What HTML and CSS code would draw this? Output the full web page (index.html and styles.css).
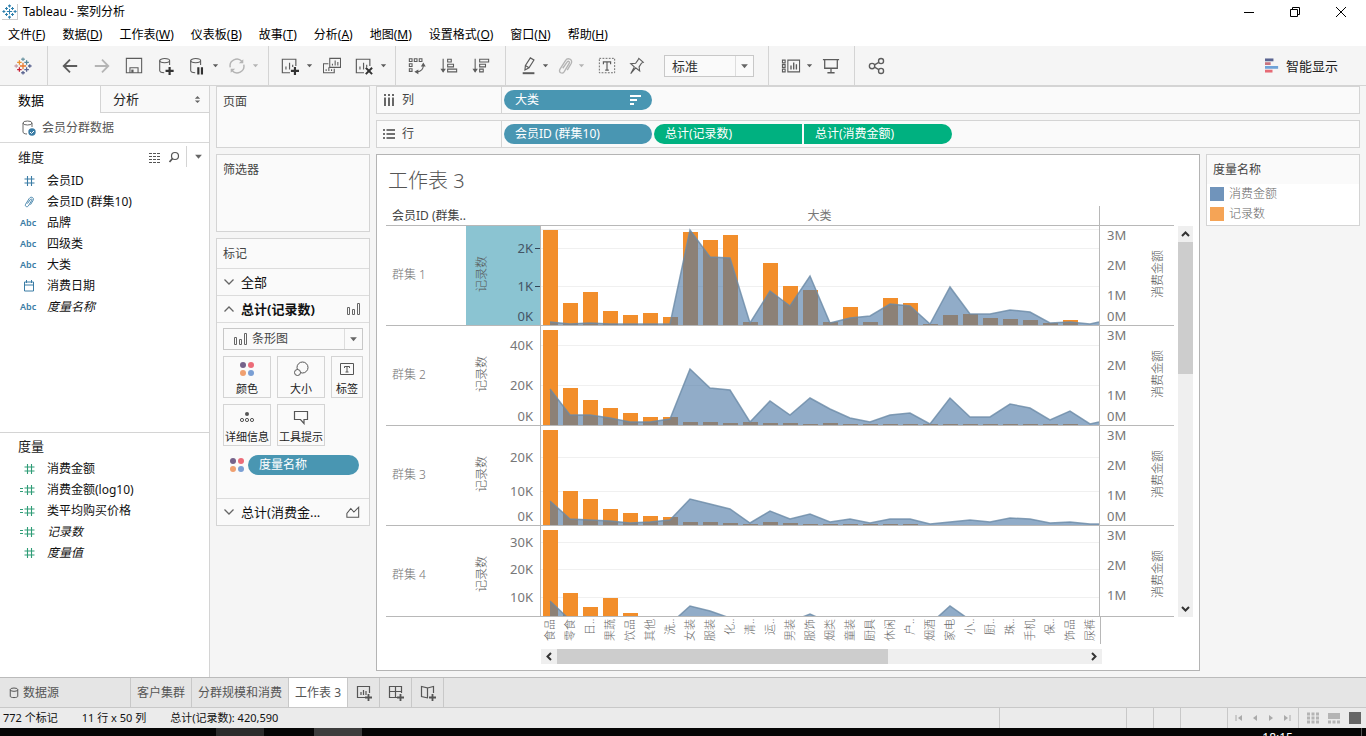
FILE: index.html
```html
<!DOCTYPE html>
<html lang="zh-CN">
<head>
<meta charset="utf-8">
<title>Tableau - 案列分析</title>
<link rel="stylesheet" href="styles.css">
</head>
<body>
<svg class="defs" aria-hidden="true">
  <symbol id="i-logo" viewBox="0 0 20 20"><g fill="none" stroke-width="1.4"><path stroke="#e8762d" d="M10 6.5v7M6.5 10h7"/><path stroke="#c72035" d="M6 11.5v5M3.500 14h5"/><path stroke="#eb912c" d="M6 3.500v5M3.500 6h5"/><path stroke="#5c6692" d="M14 11.500v5M11.500 14h5"/><path stroke="#59879b" d="M14 3.500v5M11.500 6h5"/><path stroke="#7199a6" d="M10 .5v4M8 2.500h4"/><path stroke="#5b6591" d="M10 15.500v4M8 17.500h4M17.500 8v4M15.500 10h4"/><path stroke="#c9a0a8" d="M2.500 8v4M.5 10h4"/></g></symbol>
  <symbol id="i-logo-blue" viewBox="0 0 20 20"><g fill="none" stroke="#2f80ad" stroke-width="1.400"><path d="M10 6.500v7M6.500 10h7M6 12v4M4 14h4M6 4v4M4 6h4M14 12v4M12 14h4M14 4v4M12 6h4M10 .5v4M8 2.500h4M10 15.500v4M8 17.500h4M17.500 8v4M15.500 10h4M2.500 8v4M.5 10h4"/></g></symbol>
  <symbol id="i-back" viewBox="0 0 20 20"><path d="M18 10H3M10 3l-7 7 7 7" fill="none" stroke="currentColor" stroke-width="2"/></symbol>
  <symbol id="i-fwd" viewBox="0 0 20 20"><path d="M2 10h15M10 3l7 7-7 7" fill="none" stroke="currentColor" stroke-width="2"/></symbol>
  <symbol id="i-save" viewBox="0 0 20 20"><path d="M1.500 1.500h17v16h-17zM5.500 17v-5h9v5" fill="none" stroke="currentColor" stroke-width="1.200"/><path d="M7 14h2.500v3.500H7z" fill="currentColor"/></symbol>
  <symbol id="i-dsadd" viewBox="0 0 20 20"><path d="M14 9V4M3 4v11c0 1.300 2 2.300 5 2.500" fill="none" stroke="currentColor" stroke-width="1.200"/><ellipse cx="8.500" cy="4" rx="5.500" ry="2.300" fill="none" stroke="currentColor" stroke-width="1.200"/><path d="M14 11v9M9.500 15.500h9" stroke="#333" stroke-width="2.400"/></symbol>
  <symbol id="i-dspause" viewBox="0 0 20 20"><path d="M14 9V4M3 4v11c0 1.300 2 2.300 5 2.500" fill="none" stroke="currentColor" stroke-width="1.200"/><ellipse cx="8.500" cy="4" rx="5.500" ry="2.300" fill="none" stroke="currentColor" stroke-width="1.200"/><path d="M11.500 11.500v8M15.500 11.500v8" stroke="#333" stroke-width="2.400"/></symbol>
  <symbol id="i-refresh" viewBox="0 0 20 20"><path d="M2.500 11.500a7.500 7.500 0 0 1 13-6.500M17.500 8.500a7.500 7.500 0 0 1-13 6.500" fill="none" stroke="currentColor" stroke-width="1.600"/><path d="M17 2.500V7h-5zM3 17.500V13h5z" fill="currentColor"/></symbol>
  <symbol id="i-sheetadd" viewBox="0 0 20 20"><path d="M10 17.500H1.500v-15h15V10M5.500 14v-3.500M9.500 14V6.500M13 11V8.500" fill="none" stroke="currentColor" stroke-width="1.300"/><path d="M15.500 11v9M11 15.500h9" stroke="#333" stroke-width="2.400"/></symbol>
  <symbol id="i-dup" viewBox="0 0 20 20"><path d="M7.500 1.500h12v10h-12zM6 7.500H.5v10h12V13M10.500 9.500v-2M13.500 9.500V4M16.500 9.500v-4M3.500 15.500v-2M6.500 15.500v-4M9.500 15.500v-2" fill="none" stroke="currentColor" stroke-width="1.200"/></symbol>
  <symbol id="i-clear" viewBox="0 0 20 20"><path d="M10 17.500H1.500v-15h15V10M5.500 14v-3.500M9.500 14V6.500M13 11V8.500" fill="none" stroke="currentColor" stroke-width="1.300"/><path d="M12 12l7 7M19 12l-7 7" stroke="#333" stroke-width="2.200"/></symbol>
  <symbol id="i-swap" viewBox="0 0 20 20"><path d="M1.500 2h3v3h-3zM7 2h3v3H7zM12.500 2h3v3h-3zM1.500 7.500h3v3h-3zM1.500 13h3v3h-3zM17 9.500c0 4-2.500 6.500-7 7" fill="none" stroke="currentColor" stroke-width="1.200"/><path d="M17 6l2.700 4.500h-5.400zM7 16.500l4.500-2.700v5.400z" fill="currentColor"/></symbol>
  <symbol id="i-sortasc" viewBox="0 0 20 20"><path d="M3.500 2v14M8.500 2.500h4v3h-4zM8.500 8h6.500v3H8.500zM8.500 13.500h10v3h-10z" fill="none" stroke="currentColor" stroke-width="1.200"/><path d="M.5 13h6l-3 4.500z" fill="currentColor"/></symbol>
  <symbol id="i-sortdesc" viewBox="0 0 20 20"><path d="M3.500 2v14M8.500 2.500h10v3h-10zM8.500 8h6.500v3H8.500zM8.500 13.500h4v3h-4z" fill="none" stroke="currentColor" stroke-width="1.200"/><path d="M.5 13h6l-3 4.500z" fill="currentColor"/></symbol>
  <symbol id="i-pen" viewBox="0 0 20 20"><path d="M6 9.500L11.500 1l4 2.300L10 12l-4.500 2.500zM6 9.500l4 2.500" fill="none" stroke="currentColor" stroke-width="1.300"/><path d="M3 18h13" stroke="currentColor" stroke-width="2.200"/></symbol>
  <symbol id="i-clip" viewBox="0 0 20 20"><path d="M7.500 12.500l5-7c1.200-1.500 3.200-.3 2.300 1.400L9 16.500c-2 2.800-6.500.8-4.700-2.700L10.500 4c2.500-3.800 8.500-1.500 6.500 3l-4.500 7.500" fill="none" stroke="currentColor" stroke-width="1.500"/></symbol>
  <symbol id="i-tbox" viewBox="0 0 20 20"><path d="M1.500 1.500h17v16h-17z" fill="none" stroke="currentColor" stroke-dasharray="2 1.500"/><path d="M6 8V5.500h8V8M10 5.500v9M8 14.500h4" fill="none" stroke="currentColor" stroke-width="1.300"/></symbol>
  <symbol id="i-pin" viewBox="0 0 20 20"><path d="M12 1.500l5 4.500-2 .8-2.700 4.200.7 4.500-4.500-3.500L3 18.500l4-7.500-4-3.500 5.500-.5 2.500-3.500z" fill="none" stroke="currentColor" stroke-width="1.200"/></symbol>
  <symbol id="i-showme" viewBox="0 0 22 20"><path d="M1.500 3.500h3v3h-3zM1.500 8.500h3v3h-3zM1.500 13.500h3v3h-3zM7.500 3.500h13v13h-13z" fill="none" stroke="currentColor" stroke-width="1.200"/><path d="M11 14V9.500M14 14V6M17 14V8" stroke="currentColor" stroke-width="1.500"/></symbol>
  <symbol id="i-present" viewBox="0 0 20 20"><path d="M1 3h18M3 3v9.500h14V3M10 12.500v5M6 17.500h8" fill="none" stroke="currentColor" stroke-width="1.400"/></symbol>
  <symbol id="i-share" viewBox="0 0 20 20"><g fill="none" stroke="currentColor" stroke-width="1.500"><circle cx="4.500" cy="10" r="3"/><circle cx="14.500" cy="4.500" r="2.800"/><circle cx="14.500" cy="15.500" r="2.800"/><path d="M7.200 8.700l4.800-2.700M7.200 11.300l4.800 2.700"/></g></symbol>
  <symbol id="i-smart" viewBox="0 0 16 16"><path d="M0 2h9" stroke="#5b6591" stroke-width="3"/><path d="M0 6h6" stroke="#c8737f" stroke-width="3"/><path d="M0 10h14" stroke="#6fa3d8" stroke-width="3"/><path d="M0 14h8" stroke="#e66a75" stroke-width="3"/></symbol>
  <symbol id="i-caret" viewBox="0 0 8 8"><path d="M1 2.500h6l-3 3.500z" fill="currentColor"/></symbol>
  <symbol id="i-ds" viewBox="0 0 16 16"><path d="M2 3v9c0 1 1.500 2 4 2M11 3v4" fill="none" stroke="#666"/><ellipse cx="6.500" cy="3" rx="4.500" ry="2" fill="none" stroke="#666"/><circle cx="11" cy="12" r="3.700" fill="#3a7ca5"/><path d="M9 12l1.500 1.500L13 11" fill="none" stroke="#fff"/></symbol>
  <symbol id="i-cyl" viewBox="0 0 12 14"><path d="M1.500 3v8c0 2 9 2 9 0V3" fill="none" stroke="currentColor" stroke-width="1.200"/><ellipse cx="6" cy="3" rx="4.500" ry="2" fill="none" stroke="currentColor" stroke-width="1.200"/></symbol>
  <symbol id="i-list" viewBox="0 0 12 12"><path d="M0 2.500h12M0 5.500h12M0 8.500h12M0 11.500h12" stroke="#555" stroke-dasharray="3 1"/></symbol>
  <symbol id="i-find" viewBox="0 0 12 12"><circle cx="7" cy="5" r="3.500" fill="none" stroke="#555" stroke-width="1.200"/><path d="M4.500 7.500L1.500 11" stroke="#555" stroke-width="1.700"/></symbol>
  <symbol id="i-hash" viewBox="0 0 18 12"><path d="M7.500 1v10M11.500 1v10M4.500 4h10M4.500 8h10" stroke="currentColor" stroke-width="1.100"/></symbol>
  <symbol id="i-eqhash" viewBox="0 0 18 12"><path d="M7.500 1v10M11.500 1v10M4.500 4h10M4.500 8h10M0 4.500h3M0 7.500h3" stroke="currentColor" stroke-width="1.100"/></symbol>
  <symbol id="i-date" viewBox="0 0 18 12"><path d="M4.500 2h9v9h-9zM4.500 5h9M6.500 0v3M11.500 0v3" fill="none" stroke="currentColor"/></symbol>
  <symbol id="i-bars" viewBox="0 0 14 14"><path d="M1.500 5.500h2v7h-2zM6.500 7.500h2v5h-2zM11.500 1.500h2v11h-2z" fill="none" stroke="#666"/></symbol>
  <symbol id="i-area" viewBox="0 0 16 14"><path d="M1 13V8.500L5.500 3 9 7l5.500-5.500V13z" fill="none" stroke="#555" stroke-width="1.200"/></symbol>
  <symbol id="i-down" viewBox="0 0 12 8"><path d="M1.500 1.500L6 6l4.500-4.500" fill="none" stroke="#666" stroke-width="1.300"/></symbol>
  <symbol id="i-up" viewBox="0 0 12 8"><path d="M1.500 6.500L6 2l4.500 4.500" fill="none" stroke="#666" stroke-width="1.300"/></symbol>
  <symbol id="i-color" viewBox="0 0 16 16"><circle cx="4" cy="4" r="3" fill="#75628a"/><circle cx="12" cy="4" r="3" fill="#ec6b78"/><circle cx="4" cy="12" r="3" fill="#f0a070"/><circle cx="12" cy="12" r="3" fill="#7a9fd4"/></symbol>
  <symbol id="i-size" viewBox="0 0 16 16"><circle cx="9.500" cy="6.500" r="5.500" fill="none" stroke="#555"/><circle cx="4.500" cy="11.500" r="3" fill="#fafafa" stroke="#555"/></symbol>
  <symbol id="i-label" viewBox="0 0 16 16"><path d="M1.500 2.500h13v11h-13zM5.500 7V5.500h5V7M8 5.500V11M6.500 11h3" fill="none" stroke="#555"/></symbol>
  <symbol id="i-detail" viewBox="0 0 16 16"><circle cx="8" cy="5" r="2" fill="#555"/><g fill="none" stroke="#555"><circle cx="3" cy="11" r="1.600"/><circle cx="8" cy="11" r="1.600"/><circle cx="13" cy="11" r="1.600"/></g></symbol>
  <symbol id="i-tip" viewBox="0 0 16 16"><path d="M1.500 2.500h13v8H11v4L7.500 10.500h-6z" fill="none" stroke="#555" stroke-width="1.200"/></symbol>
  <symbol id="i-cols" viewBox="0 0 12 12"><path d="M2 0v2M6 0v2M10 0v2M2 3.500V12M6 3.500V12M10 3.500V12" stroke="#444" stroke-width="1.600"/></symbol>
  <symbol id="i-rows" viewBox="0 0 12 12"><path d="M0 2h2M0 6h2M0 10h2M3.500 2H12M3.500 6H12M3.500 10H12" stroke="#444" stroke-width="1.600"/></symbol>
  <symbol id="i-sort" viewBox="0 0 12 12"><path d="M1 2h11M1 6h7M1 10h4" stroke="#fff" stroke-width="2"/></symbol>
  <symbol id="i-tabsheet" viewBox="0 0 16 16"><path d="M9 12.500H1.500v-11h12V8M5 10V7M7.500 10V5M10 10V6" fill="none" stroke="currentColor" stroke-width="1.200"/><path d="M12.500 9v7M9 12.500h7" stroke="currentColor" stroke-width="1.800"/></symbol>
  <symbol id="i-tabdash" viewBox="0 0 16 16"><path d="M9 12.500H1.500v-11h12V8M1.500 6.500h12M7.500 1.500v11" fill="none" stroke="currentColor" stroke-width="1.200"/><path d="M12.500 9v7M9 12.500h7" stroke="currentColor" stroke-width="1.800"/></symbol>
  <symbol id="i-tabstory" viewBox="0 0 16 16"><path d="M8 13L1.500 11.500v-10L7.500 3v10M7.500 3l6-1.500V8" fill="none" stroke="currentColor" stroke-width="1.200"/><path d="M12.500 9v7M9 12.500h7" stroke="currentColor" stroke-width="1.800"/></symbol>
</svg>

<header>
  <div class="titlebar">
    <svg class="app-icon"><use href="#i-logo-blue"/></svg>
    <span class="app-title">Tableau - 案列分析</span>
    <div class="window-buttons">
      <button aria-label="最小化"><svg viewBox="0 0 12 12"><path d="M1 6.500h10" stroke="#000"/></svg></button>
      <button aria-label="还原"><svg viewBox="0 0 12 12"><path d="M1.500 3.500h7v7h-7zM3.500 3.500v-2h7v7h-2" fill="none" stroke="#000"/></svg></button>
      <button aria-label="关闭"><svg viewBox="0 0 12 12"><path d="M1 1l10 10M11 1L1 11" stroke="#000"/></svg></button>
    </div>
  </div>
  <nav class="menubar">
    <button>文件(<u>F</u>)</button><button>数据(<u>D</u>)</button><button>工作表(<u>W</u>)</button><button>仪表板(<u>B</u>)</button><button>故事(<u>T</u>)</button><button>分析(<u>A</u>)</button><button>地图(<u>M</u>)</button><button>设置格式(<u>O</u>)</button><button>窗口(<u>N</u>)</button><button>帮助(<u>H</u>)</button>
  </nav>
  <div class="toolbar">
    <div class="tools tools-home"><button class="tool" aria-label="开始页"><svg><use href="#i-logo"/></svg></button></div>
    <div class="tools tools-file">
      <button class="tool" aria-label="撤消"><svg><use href="#i-back"/></svg></button>
      <button class="tool dim" aria-label="重做"><svg><use href="#i-fwd"/></svg></button>
      <button class="tool" aria-label="保存"><svg><use href="#i-save"/></svg></button>
      <button class="tool" aria-label="新建数据源"><svg><use href="#i-dsadd"/></svg></button>
      <button class="tool mid" aria-label="暂停更新"><svg><use href="#i-dspause"/></svg></button>
      <button class="more" aria-label="更多"><svg><use href="#i-caret"/></svg></button>
      <button class="tool mid dim" aria-label="刷新"><svg><use href="#i-refresh"/></svg></button>
      <button class="more dim" aria-label="更多"><svg><use href="#i-caret"/></svg></button>
    </div>
    <div class="tools tools-sheet">
      <button class="tool" aria-label="新建工作表"><svg><use href="#i-sheetadd"/></svg></button>
      <button class="more" aria-label="更多"><svg><use href="#i-caret"/></svg></button>
      <button class="tool" aria-label="复制"><svg><use href="#i-dup"/></svg></button>
      <button class="tool" aria-label="清除"><svg><use href="#i-clear"/></svg></button>
      <button class="more" aria-label="更多"><svg><use href="#i-caret"/></svg></button>
    </div>
    <div class="tools tools-sort">
      <button class="tool" aria-label="交换行和列"><svg><use href="#i-swap"/></svg></button>
      <button class="tool" aria-label="升序"><svg><use href="#i-sortasc"/></svg></button>
      <button class="tool" aria-label="降序"><svg><use href="#i-sortdesc"/></svg></button>
    </div>
    <div class="tools tools-format">
      <button class="tool slim" aria-label="突出显示"><svg><use href="#i-pen"/></svg></button>
      <button class="more" aria-label="更多"><svg><use href="#i-caret"/></svg></button>
      <button class="tool slim dim" aria-label="组"><svg><use href="#i-clip"/></svg></button>
      <button class="more dim" aria-label="更多"><svg><use href="#i-caret"/></svg></button>
      <button class="tool mid text-tool" aria-label="显示标签"><svg><use href="#i-tbox"/></svg></button>
      <button class="tool mid" aria-label="固定轴"><svg><use href="#i-pin"/></svg></button>
      <div class="combo fit"><select aria-label="适合"><option>标准</option></select><svg class="combo-caret"><use href="#i-caret"/></svg></div>
    </div>
    <div class="tools tools-view">
      <button class="tool mid" aria-label="显示卡"><svg class="wide"><use href="#i-showme"/></svg></button>
      <button class="more" aria-label="更多"><svg><use href="#i-caret"/></svg></button>
      <button class="tool mid" aria-label="演示模式"><svg><use href="#i-present"/></svg></button>
    </div>
    <div class="tools tools-share"><button class="tool mid" aria-label="共享"><svg><use href="#i-share"/></svg></button></div>
    <button class="smart"><svg><use href="#i-smart"/></svg>智能显示</button>
  </div>
</header>

<main class="workspace">
  <aside class="data-pane">
    <div class="pane-tabs">
      <button class="pane-tab active">数据</button>
      <button class="pane-tab">分析<svg viewBox="0 0 8 10"><path d="M1 4l3-3 3 3zM1 6l3 3 3-3z" fill="#666"/></svg></button>
    </div>
    <div class="source"><svg><use href="#i-ds"/></svg>会员分群数据</div>
    <section class="fields dims">
      <div class="fields-head"><h2>维度</h2>
        <button aria-label="查看数据"><svg><use href="#i-list"/></svg></button>
        <button aria-label="查找"><svg><use href="#i-find"/></svg></button>
        <button class="fields-menu" aria-label="菜单"><svg><use href="#i-caret"/></svg></button>
      </div>
      <ul>
        <li><svg><use href="#i-hash"/></svg>会员ID</li>
        <li><svg><use href="#i-clip"/></svg>会员ID (群集10)</li>
        <li><span class="abc">Abc</span>品牌</li>
        <li><span class="abc">Abc</span>四级类</li>
        <li><span class="abc">Abc</span>大类</li>
        <li><svg><use href="#i-date"/></svg>消费日期</li>
        <li><span class="abc">Abc</span><i>度量名称</i></li>
      </ul>
    </section>
    <section class="fields measures">
      <div class="fields-head"><h2>度量</h2></div>
      <ul>
        <li><svg><use href="#i-hash"/></svg>消费金额</li>
        <li><svg><use href="#i-eqhash"/></svg>消费金额(log10)</li>
        <li><svg><use href="#i-eqhash"/></svg>类平均购买价格</li>
        <li><svg><use href="#i-eqhash"/></svg><i>记录数</i></li>
        <li><svg><use href="#i-hash"/></svg><i>度量值</i></li>
      </ul>
    </section>
  </aside>

  <div class="cards">
    <section class="card pages"><h3>页面</h3></section>
    <section class="card filters"><h3>筛选器</h3></section>
    <section class="card marks">
      <h3>标记</h3>
      <button class="mark-row"><svg class="chev"><use href="#i-down"/></svg><span>全部</span></button>
      <button class="mark-row open"><svg class="chev"><use href="#i-up"/></svg><span>总计(记录数)</span><svg class="kind"><use href="#i-bars"/></svg></button>
      <div class="mark-body">
        <div class="combo mark-type"><svg class="kind"><use href="#i-bars"/></svg><select aria-label="标记类型"><option>条形图</option></select><svg class="combo-caret"><use href="#i-caret"/></svg></div>
        <div class="mark-buttons">
          <button><svg><use href="#i-color"/></svg>颜色</button>
          <button><svg><use href="#i-size"/></svg>大小</button>
          <button><svg><use href="#i-label"/></svg>标签</button>
          <button><svg><use href="#i-detail"/></svg>详细信息</button>
          <button><svg><use href="#i-tip"/></svg>工具提示</button>
        </div>
        <div class="mark-pill"><svg><use href="#i-color"/></svg><button class="pill blue">度量名称</button></div>
      </div>
      <button class="mark-row"><svg class="chev"><use href="#i-down"/></svg><span>总计(消费金...</span><svg class="kind"><use href="#i-area"/></svg></button>
    </section>
  </div>

  <div class="view">
    <div class="shelf"><div class="shelf-name"><svg><use href="#i-cols"/></svg>列</div>
      <div class="shelf-pills"><button class="pill blue">大类<svg><use href="#i-sort"/></svg></button></div></div>
    <div class="shelf"><div class="shelf-name"><svg><use href="#i-rows"/></svg>行</div>
      <div class="shelf-pills"><button class="pill blue">会员ID (群集10)</button><button class="pill green first">总计(记录数)</button><button class="pill green last">总计(消费金额)</button></div></div>
    <div class="view-body">
      <section class="sheet">
        <h1>工作表 3</h1>
        <div class="sheet-scroll">
          <div class="viz">
            <div class="viz-head"><span class="row-head">会员ID (群集..</span><span class="col-head">大类</span><span></span></div>
            <div id="rows"></div>
            <div class="viz-foot"><div class="categories" id="categories"></div></div>
          </div>
          <div class="vscroll"><svg viewBox="0 0 15 15"><path d="M4 9.500L7.500 6 11 9.500" fill="none" stroke="#333" stroke-width="2"/></svg><div class="vthumb"></div><svg viewBox="0 0 15 15"><path d="M4 5.500L7.500 9 11 5.500" fill="none" stroke="#333" stroke-width="2"/></svg></div>
        </div>
        <div class="hscroll"><svg viewBox="0 0 15 15"><path d="M9.500 4L6 7.500 9.500 11" fill="none" stroke="#333" stroke-width="2"/></svg><div class="hthumb"></div><svg viewBox="0 0 15 15"><path d="M5.500 4L9 7.500 5.500 11" fill="none" stroke="#333" stroke-width="2"/></svg></div>
      </section>
      <aside class="legend">
        <h3>度量名称</h3>
        <ul><li><span class="swatch amount"></span>消费金额</li><li><span class="swatch count"></span>记录数</li></ul>
      </aside>
    </div>
  </div>
</main>

<nav class="sheet-tabs">
  <button class="source-tab"><svg class="cyl"><use href="#i-cyl"/></svg>数据源</button>
  <button>客户集群</button><button>分群规模和消费</button><button class="active">工作表 3</button>
  <button class="new-tab" aria-label="新建工作表"><svg><use href="#i-tabsheet"/></svg></button>
  <button class="new-tab" aria-label="新建仪表板"><svg><use href="#i-tabdash"/></svg></button>
  <button class="new-tab" aria-label="新建故事"><svg><use href="#i-tabstory"/></svg></button>
</nav>
<footer class="status">
  <span>772 个标记</span><span>11 行 x 50 列</span><span>总计(记录数): 420,590</span>
  <div class="status-cells">
    <div class="cell-wide"></div><div class="cell-small"></div><div class="cell-small"></div><div class="cell-mid"></div>
    <div class="nav-cell">
      <button aria-label="第一个"><svg viewBox="0 0 10 8"><path d="M2 1v6" stroke="#aaa"/><path d="M8 1v6L4 4z" fill="#aaa"/></svg></button>
      <button aria-label="上一个"><svg viewBox="0 0 10 8"><path d="M7 1v6L3 4z" fill="#aaa"/></svg></button>
      <button aria-label="下一个"><svg viewBox="0 0 10 8"><path d="M3 1v6l4-3z" fill="#aaa"/></svg></button>
      <button aria-label="最后一个"><svg viewBox="0 0 10 8"><path d="M8 1v6" stroke="#aaa"/><path d="M2 1v6l4-3z" fill="#aaa"/></svg></button>
    </div>
    <div class="mode-cell">
      <button aria-label="工作表排序程序"><svg viewBox="0 0 12 12"><path d="M0 2h12M0 6h12M0 10h12" stroke="#b4b4b4" stroke-width="3" stroke-dasharray="3 1.500"/></svg></button>
      <button aria-label="胶片"><svg viewBox="0 0 12 12"><path d="M0 4h12" stroke="#b4b4b4" stroke-width="6"/><path d="M0 10h12" stroke="#b4b4b4" stroke-width="3" stroke-dasharray="3 1.500"/></svg></button>
      <button aria-label="标签"><svg viewBox="0 0 12 12"><path d="M0 0h12v12H0z" fill="#666"/></svg></button>
    </div>
  </div>
</footer>
<div class="taskbar"><span class="task"></span><span class="task lit"></span><span class="clock">18:15</span><span class="edge"></span></div>
<script src="chart.js"></script>
</body>
</html>
```

FILE: styles.css
```css
* { box-sizing: border-box; }
body {
  margin: 0; height: 100vh; display: flex; flex-direction: column; overflow: hidden;
  background: #f5f5f5; color: #222;
  font: 12px/16px "Noto Sans", "Noto Sans CJK SC", sans-serif;
}
button, select { font: inherit; color: inherit; background: none; border: 0; padding: 0; margin: 0; }
h1, h2, h3, ul { margin: 0; padding: 0; font-weight: 400; list-style: none; }
svg { display: block; flex: none; }
.defs { width: 0; height: 0; position: absolute; }

/* window frame */
.titlebar { display: flex; align-items: center; height: 23px; background: #fff; color: #000; padding-left: 2px; }
.app-icon { width: 16px; height: 16px; border-right: 1px solid #ccc; border-bottom: 1px solid #ccc; }
.app-title { margin-left: 5px; }
.window-buttons { margin-left: auto; margin-right: 2px; display: flex; }
.window-buttons button { width: 46px; height: 22px; display: grid; place-items: center; }
.window-buttons svg { width: 12px; height: 12px; }
.menubar { display: flex; gap: 17px; height: 23px; padding: 0 8px; background: #fff; color: #000; align-items: center; }

/* toolbar */
.toolbar { display: flex; height: 40px; border-bottom: 1px solid #d4d4d4; color: #5c5c5c; }
.tools { display: flex; align-items: center; border-right: 1px solid #d4d4d4; }
.tool { width: 32px; height: 32px; display: grid; place-items: center; }
.tool svg { width: 18px; height: 18px; }
.tool svg.wide { width: 22px; }
.tool.mid { width: 30px; }
.tool.slim { width: 26px; }
.more { width: 10px; }
.more svg { width: 7px; height: 7px; }
.dim { color: #b4b4b4; }
.tools-home { padding: 0 8px 0 7px; }
.tools-file { padding: 0 6px; }
.tools-sheet { padding: 0 5px; }
.tools-sort { padding: 0 8px 0 5px; }
.tools-format { padding: 0 14px 0 10px; }
.text-tool { margin-left: 4px; }
.tools-view { padding: 0 8px 0 7px; }
.tools-share { padding: 0 7px; border-right: 0; }
.combo { display: flex; align-items: center; border: 1px solid #c8c8c8; height: 22px; background: #fafafa; }
.combo select { appearance: none; flex: 1; min-width: 0; height: 20px; outline: 0; color: #333; }
.combo-caret { width: 18px; height: 20px; padding: 5px 4px; border-left: 1px solid #ddd; color: #666; }
.fit { width: 90px; margin-left: 12px; }
.fit select { padding-left: 7px; font-size: 13px; }
.smart { margin-left: auto; margin-right: 28px; display: flex; align-items: center; gap: 6px; font-size: 13px; color: #222; }
.smart svg { width: 15px; height: 15px; }

/* workspace */
.workspace { flex: 1; min-height: 0; display: flex; gap: 6px; padding-right: 6px; }
.data-pane { width: 210px; flex: none; background: #fff; border-right: 1px solid #d4d4d4; display: flex; flex-direction: column; }
.pane-tabs { display: flex; height: 27px; }
.pane-tab { display: flex; align-items: center; flex: 1; padding: 0 8px 0 12px; background: #f9f9f9; border-left: 1px solid #d4d4d4; border-bottom: 1px solid #d4d4d4; font-size: 13px; }
.pane-tab.active { flex: 0 0 100px; background: #fff; border: 0; padding-left: 18px; color: #000; }
.pane-tab svg { width: 7px; height: 9px; margin-left: auto; }
.source { display: flex; align-items: center; gap: 5px; height: 30px; padding-left: 21px; border-bottom: 1px solid #d8d8d8; color: #555; }
.source svg { width: 16px; height: 16px; }
.fields-head { display: flex; align-items: center; height: 27px; padding-left: 18px; }
.fields-head h2 { font-size: 13px; margin-right: auto; }
.fields-head button { width: 19px; display: grid; place-items: center; }
.fields-head svg { width: 12px; height: 12px; }
.fields-head .fields-menu { width: 23px; height: 21px; border-left: 1px solid #d4d4d4; margin-left: 3px; color: #666; }
.fields-head .fields-menu svg { width: 9px; height: 9px; }
.fields li { display: flex; align-items: center; height: 21px; padding-left: 20px; color: #111; }
.fields li svg { width: 18px; height: 12px; margin-right: 9px; color: #3a7ca5; }
.abc { width: 18px; margin-right: 9px; font-size: 9px; font-weight: 600; color: #3a7ca5; }
.dims { height: 290px; border-bottom: 1px solid #d4d4d4; }
.measures .fields-head { height: 25px; }
.measures li svg { color: #2e9c76; }

.cards { width: 154px; flex: none; display: flex; flex-direction: column; gap: 6px; }
.card { background: #fafafa; border: 1px solid #d4d4d4; color: #444; }
.card h3 { font-size: 12px; line-height: 16px; padding: 7px 6px 5px; }
.pages { height: 62px; }
.filters { height: 78px; }
.marks h3 { height: 29px; }
.mark-row { display: flex; width: 100%; align-items: center; height: 27px; border-top: 1px solid #dcdcdc; padding: 0 9px 0 6px; color: #111; font-size: 13px; text-align: left; }
.mark-row span { flex: 1; margin-left: 6px; }
.mark-row.open { font-weight: 700; border-bottom: 1px solid #dcdcdc; height: 28px; }
.chev { width: 12px; height: 8px; }
.kind { width: 14px; height: 14px; }
.mark-body { padding: 5px 6px 0; height: 175px; }
.mark-type { width: 140px; }
.mark-type .kind { margin-left: 9px; }
.mark-type select { padding-left: 5px; color: #444; }
.mark-buttons { display: grid; grid-template-columns: 48px 48px 32px; gap: 6px; margin-top: 6px; }
.mark-buttons button { height: 42px; border: 1px solid #d4d4d4; display: flex; flex-direction: column; align-items: center; justify-content: space-between; font-size: 11px; line-height: 16px; padding-top: 4px; color: #222; white-space: nowrap; }
.mark-buttons svg { width: 16px; height: 16px; }
.mark-pill { display: flex; align-items: center; gap: 3px; margin-top: 9px; padding-left: 6px; }
.mark-pill svg { width: 16px; height: 16px; }
.pill { display: flex; align-items: center; justify-content: space-between; height: 20px; padding: 0 11px; border-radius: 10px; color: #fff; width: 148px; }
.pill svg { width: 12px; height: 12px; }
.mark-pill .pill { width: 111px; }
.blue { background: #4996b2; }
.green { background: #00b180; }
.first { border-radius: 10px 0 0 10px; }
.last { border-radius: 0 10px 10px 0; }

.view { flex: 1; min-width: 0; display: flex; flex-direction: column; gap: 6px; }
.shelf { display: flex; height: 28px; background: #fafafa; border: 1px solid #d4d4d4; color: #444; }
.shelf-name { width: 125px; display: flex; align-items: center; gap: 7px; padding-left: 6px; border-right: 1px solid #d4d4d4; }
.shelf-name svg { width: 12px; height: 12px; }
.shelf-pills { display: flex; align-items: center; gap: 2px; padding-left: 2px; }
.view-body { flex: 1; min-height: 0; display: flex; gap: 6px; align-items: flex-start; }
.sheet { flex: 1; min-width: 0; height: calc(100% - 6px); background: #fff; border: 1px solid #b4b4b4; padding: 0 6px 0 9px; color: #777; }
.sheet h1 { font-size: 20px; line-height: 51px; height: 51px; padding-left: 2px; color: #555; font-weight: 300; }
.sheet-scroll { display: flex; gap: 4px; }
.viz { flex: 1; min-width: 0; }
.viz-head, .viz-row, .viz-foot { display: grid; grid-template-columns: 80px 74px 1fr 74px; }
.viz-head { height: 20px; border-bottom: 1px solid #b8b8b8; line-height: 20px; }
.row-head { grid-column: 1 / 3; padding-left: 6px; color: #444; }
.col-head { text-align: center; border-right: 1px solid #b8b8b8; }
.viz-row { height: 100px; border-bottom: 1px solid #b8b8b8; overflow: hidden; }
.viz-row:last-child { height: 91px; }
.row-label { padding-left: 6px; line-height: 97px; font-weight: 300; }
.axis { width: 74px; height: 99px; font-size: 13px; fill: #777; }
.axis .axis-title { font-size: 12px; fill: #555; font-weight: 300; }
.axis.selected { background: #8bc4d2; fill: #456; }
.axis path { stroke: #345; }
.plot { width: 100%; height: 99px; border: solid #b8b8b8; border-width: 0 1px; }
.plot .grid { stroke: #f0f0f0; vector-effect: non-scaling-stroke; }
.plot .bar { fill: #f28e2b; }
.plot .area { fill: #4e79a7; fill-opacity: .62; }
.plot .line { fill: none; stroke: #6a89a6; stroke-opacity: .8; stroke-width: 1.5; vector-effect: non-scaling-stroke; }
.categories { grid-column: 3; display: grid; grid-template-columns: repeat(28, 1fr); height: 27px; border-right: 1px solid #b8b8b8; }
.categories span { writing-mode: vertical-rl; text-orientation: sideways; transform: rotate(180deg); font-size: 11px; line-height: 20px; justify-self: center; padding-bottom: 2px; white-space: nowrap; text-align: right; font-weight: 300; color: #666; }
.vscroll { width: 15px; margin: 20px 0 27px; background: #efefef; display: flex; flex-direction: column; justify-content: space-between; }
.vscroll svg { width: 15px; height: 16px; }
.vthumb { height: 132px; margin-bottom: auto; background: #cdcdcd; }
.hscroll { display: flex; height: 15px; margin: 5px 91px 0 155px; background: #efefef; }
.hscroll svg { width: 16px; height: 15px; }
.hthumb { width: 59%; margin-right: auto; background: #cdcdcd; }

.legend { width: 154px; flex: none; height: 72px; border: 1px solid #d4d4d4; background: #fff; color: #666; }
.legend h3 { font-size: 12px; line-height: 16px; padding: 7px 6px 5px; height: 29px; background: #fafafa; color: #444; }
.legend li { display: flex; align-items: center; gap: 5px; height: 20px; padding-left: 3px; font-weight: 300; }
.swatch { width: 14px; height: 14px; }
.amount { background: #7094bb; }
.count { background: #f5a456; }

/* bottom bars */
.sheet-tabs { display: flex; height: 30px; flex: none; background: #e5e5e5; border-top: 1px solid #bbb; color: #555; }
.sheet-tabs button { padding: 0 6px; border-right: 1px solid #c8c8c8; }
.sheet-tabs .source-tab { display: flex; align-items: center; gap: 4px; width: 131px; padding-left: 9px; }
.sheet-tabs .cyl { width: 10px; height: 12px; }
.sheet-tabs .active { background: #fff; }
.sheet-tabs .new-tab { width: 32px; padding: 0 8px; }
.new-tab svg { width: 16px; height: 16px; }
.status { display: flex; align-items: center; height: 21px; flex: none; background: #ebebeb; border-top: 1px solid #c8c8c8; color: #111; font-size: 11px; padding-left: 3px; gap: 24px; }
.status-cells { margin-left: auto; display: flex; align-self: stretch; }
.status-cells > div { border-left: 1px solid #c8c8c8; display: flex; align-items: center; }
.cell-wide { width: 127px; }
.cell-small { width: 27px; }
.cell-mid { width: 47px; }
.nav-cell { width: 71px; justify-content: space-around; padding: 0 3px; }
.nav-cell svg { width: 10px; height: 8px; }
.mode-cell { width: 68px; gap: 9px; padding-left: 8px; }
.mode-cell svg { width: 12px; height: 12px; }
.taskbar { height: 8px; flex: none; display: flex; background: #050505; overflow: hidden; padding-left: 216px; }
.task { width: 48px; background: #2b2b2b; margin-right: 50px; }
.task.lit { background: #3c3c3c; }
.clock { margin-left: auto; margin-right: 68px; color: #fff; line-height: 20px; }
.edge { border-left: 1px solid #555; width: 5px; }
```

FILE: chart.js
```js
// Pixel tops inside each 99px-high pane; baseline is 99.
const categories = ["食品","零食","日..","果蔬","饮品","其他","洗..","女装","服装","化..","清..","运..","男装","服饰","烟类","童装","厨具","休闲","户..","烟酒","家电","小..","厨..","珠..","手机","保..","饰品","尿裤"];
const money = [["3M", 9], ["2M", 39], ["1M", 69], ["0M", 90]];
const panes = [
  { name: "群集 1", selected: true, ticks: [["2K", 22], ["1K", 60], ["0K", 90]], money, grid: [3, 22, 60],
    bars: [4,77,66,85,89,87,91,6,14,9,96,37,60,64,96,81,96,72,77,98,89,88,92,93,94,97,94,99],
    area: [96,98,97,98,98,98,98,4,31,32,97,65,80,50,97,92,90,78,80,98,61,88,88,84,86,97,96,98,96] },
  { name: "群集 2", ticks: [["40K", 19], ["20K", 59], ["0K", 90]], money, grid: [19, 59],
    bars: [4,62,74,82,87,91,91,96,96,97,96,97,97,98,97,98,98,98,98,98,98,98,98,98,98,98,98,99],
    area: [63,89,89,92,96,96,93,43,62,64,96,75,89,72,83,92,96,89,87,98,72,91,91,78,82,94,85,98,96] },
  { name: "群集 3", ticks: [["20K", 31], ["10K", 65], ["0K", 90]], money, grid: [31, 65],
    bars: [4,65,73,83,87,90,91,96,96,97,98,96,97,98,98,98,98,98,98,99,99,99,99,99,99,99,99,99],
    area: [75,93,94,95,97,96,94,73,78,83,97,85,93,88,96,93,97,93,93,98,96,94,96,92,93,97,96,98,98] },
  { name: "群集 4", ticks: [["30K", 16], ["20K", 43], ["10K", 71]], money: money.slice(0, 3), grid: [16, 43, 71],
    bars: [4,67,81,72,87,99,99,99,99,99,99,99,99,99,99,99,99,99,99,99,99,99,99,99,99,99,99,99],
    area: [75,94,96,97,98,98,98,80,85,92,98,92,96,88,97,97,98,96,96,98,80,94,96,94,94,98,96,98,98] }
];

const plot = p => {
  const x = i => Math.min(9 + 20 * i, 558);
  const pts = p.area.map((y, i) => `${x(i)},${y}`).join(" ");
  return `<svg class="plot" viewBox="0 0 558 99" preserveAspectRatio="none">` +
    p.grid.map(y => `<path class="grid" d="M0 ${y}.5H558"/>`).join("") +
    p.bars.map((y, i) => `<rect class="bar" x="${2 + 20 * i}" y="${y}" width="15" height="${99 - y}"/>`).join("") +
    `<polygon class="area" points="9,99 ${pts} 558,99"/><polyline class="line" points="${pts}"/></svg>`;
};

const leftAxis = p =>
  `<svg class="axis${p.selected ? " selected" : ""}">` +
  `<text class="axis-title" text-anchor="middle" transform="translate(20 48) rotate(-90)">记录数</text>` +
  p.ticks.map(([t, y]) => `<text x="67" y="${y + 5}" text-anchor="end">${t}</text>` +
    (p.selected && y < 90 ? `<path d="M69 ${y}.5h5"/>` : "")).join("") + `</svg>`;

const rightAxis = p =>
  `<svg class="axis">` + p.money.map(([t, y]) => `<text x="7" y="${y + 5}">${t}</text>`).join("") +
  `<text class="axis-title" text-anchor="middle" transform="translate(62 48) rotate(-90)">消费金额</text></svg>`;

document.getElementById("rows").innerHTML = panes.map(p =>
  `<div class="viz-row"><span class="row-label">${p.name}</span>${leftAxis(p)}${plot(p)}${rightAxis(p)}</div>`).join("");
document.getElementById("categories").innerHTML = categories.map(c => `<span>${c}</span>`).join("");
```
